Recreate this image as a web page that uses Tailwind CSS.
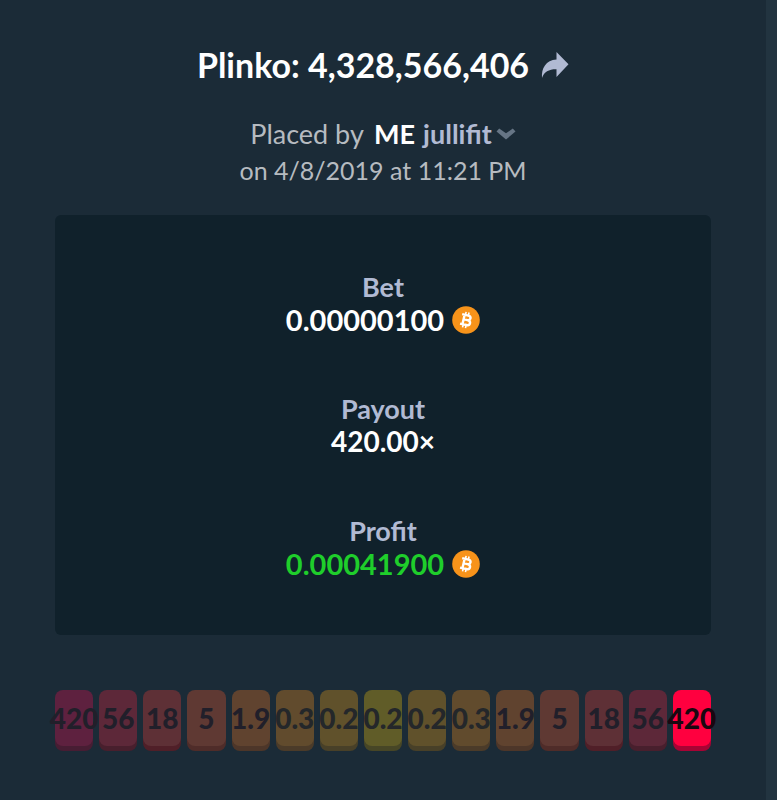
<!DOCTYPE html>
<html lang="en">
  <head>
    <meta charset="UTF-8" />
    <meta name="viewport" content="width=device-width,initial-scale=1.0" />
    <title>Plinko: 4,328,566,406</title>
    <script src="https://cdn.jsdelivr.net/npm/@tailwindcss/browser@4"></script>
  </head>
  <body class="bg-[#1b2b37] font-['Lato','Open_Sans',sans-serif]">
    <div class="flex min-h-screen">
      <main class="flex-1 min-w-0 px-[55px] pt-[43px] pb-11 text-center">
        <header>
          <div class="flex items-center justify-center gap-3">
            <h1 class="text-[34px] leading-[44px] font-bold text-white">
              Plinko: 4,328,566,406
            </h1>
            <button type="button" aria-label="Share">
              <svg class="w-7 h-7" viewBox="0 0 28 28" fill="#b1bad3">
                <path
                  d="M15.5 1 27.5 13.300 15.500 26v-7.800C8.500 18 3 20.500 1 27 .300 17.500 4.800 9.300 15.500 8.600z"
                />
              </svg>
            </button>
          </div>
          <div class="mt-7 leading-[37px] text-[#b6bbc0]">
            <div class="flex items-center justify-center text-[27px]">
              <p>
                Placed by <strong class="ml-1 font-bold text-white">ME</strong>
              </p>
              <button
                type="button"
                class="ml-2 flex items-center gap-1 font-bold text-[#b1bad3]"
              >
                jullifit
                <svg class="w-5 h-3" viewBox="0 0 20 12" fill="#667585">
                  <path d="M3.200.500 10 5.300 16.800.500 19.500 3.500 10 11.500.500 3.500z" />
                </svg>
              </button>
            </div>
            <p class="text-[25px]">on 4/8/2019 at 11:21 PM</p>
          </div>
        </header>

        <dl
          class="mt-[26px] flex flex-col gap-14 rounded-md bg-[#10212b] py-[55px] text-[28px] leading-[33px] font-bold text-white"
        >
          <div>
            <dt class="text-[27px] text-[#b1bad3]">Bet</dt>
            <dd class="flex items-center justify-center gap-2 text-[29px]">
              0.00000100
              <svg class="w-7 h-7" viewBox="0 0 28 28">
                <circle cx="14" cy="14" r="13.800" fill="#f7931a" />
                <g
                  transform="rotate(13 14 14)"
                  fill="none"
                  stroke="#fff"
                  stroke-width="2.400"
                >
                  <path
                    d="M9 9.200h6.300c3.600 0 3.600 4.600 0 4.600h-4 4.200c4.200 0 4.200 5 0 5H9M11.500 9.200v9.600"
                  />
                  <path d="M12.300 6v3M15.300 6v3M12.300 19v3M15.300 19v3" stroke-width="1.600" />
                </g>
              </svg>
            </dd>
          </div>
          <div>
            <dt class="text-[27px] text-[#b1bad3]">Payout</dt>
            <dd>420.00×</dd>
          </div>
          <div>
            <dt class="text-[27px] text-[#b1bad3]">Profit</dt>
            <dd class="flex items-center justify-center gap-2 text-[29px] text-[#1fce2b]">
              0.00041900
              <svg class="w-7 h-7" viewBox="0 0 28 28">
                <circle cx="14" cy="14" r="13.800" fill="#f7931a" />
                <g
                  transform="rotate(13 14 14)"
                  fill="none"
                  stroke="#fff"
                  stroke-width="2.400"
                >
                  <path
                    d="M9 9.200h6.300c3.600 0 3.600 4.600 0 4.600h-4 4.200c4.200 0 4.200 5 0 5H9M11.500 9.200v9.600"
                  />
                  <path d="M12.300 6v3M15.300 6v3M12.300 19v3M15.300 19v3" stroke-width="1.600" />
                </g>
              </svg>
            </dd>
          </div>
        </dl>

        <!-- payout slots, the last one is the hit -->
        <ul
          class="mt-[55px] grid grid-cols-15 gap-[6px] text-[28px] leading-[56px] font-black text-[#211f2a]"
        >
          <li class="flex h-14 justify-center rounded-lg shadow-[0_5px_0_#471d33] bg-[#5e213f]">420</li>
          <li class="flex h-14 justify-center rounded-lg shadow-[0_5px_0_#481f2d] bg-[#5d2839]">56</li>
          <li class="flex h-14 justify-center rounded-lg shadow-[0_5px_0_#501f28] bg-[#5e3036]">18</li>
          <li class="flex h-14 justify-center rounded-lg shadow-[0_5px_0_#4f2c29] bg-[#5f3933]">5</li>
          <li class="flex h-14 justify-center rounded-lg shadow-[0_5px_0_#4d3629] bg-[#60432f]">1.9</li>
          <li class="flex h-14 justify-center rounded-lg shadow-[0_5px_0_#4b3b29] bg-[#614b2d] text-[#24272a]">0.3</li>
          <li class="flex h-14 justify-center rounded-lg shadow-[0_5px_0_#484028] bg-[#60512b] text-[#24272a]">0.2</li>
          <li class="flex h-14 justify-center rounded-lg shadow-[0_5px_0_#474626] bg-[#605c28] text-[#24272a]">0.2</li>
          <li class="flex h-14 justify-center rounded-lg shadow-[0_5px_0_#484028] bg-[#60512b] text-[#24272a]">0.2</li>
          <li class="flex h-14 justify-center rounded-lg shadow-[0_5px_0_#4b3b29] bg-[#614b2d] text-[#24272a]">0.3</li>
          <li class="flex h-14 justify-center rounded-lg shadow-[0_5px_0_#4d3629] bg-[#60432f]">1.9</li>
          <li class="flex h-14 justify-center rounded-lg shadow-[0_5px_0_#4f2c29] bg-[#5f3933]">5</li>
          <li class="flex h-14 justify-center rounded-lg shadow-[0_5px_0_#501f28] bg-[#5e3036]">18</li>
          <li class="flex h-14 justify-center rounded-lg shadow-[0_5px_0_#481f2d] bg-[#5d2839]">56</li>
          <li class="flex h-14 justify-center rounded-lg shadow-[0_5px_0_#a80334] bg-[#ff003f] text-[#1a0710]">420</li>
        </ul>
      </main>
      <aside class="w-[11px] shrink-0 bg-[#223440]"></aside>
    </div>
  </body>
</html>
